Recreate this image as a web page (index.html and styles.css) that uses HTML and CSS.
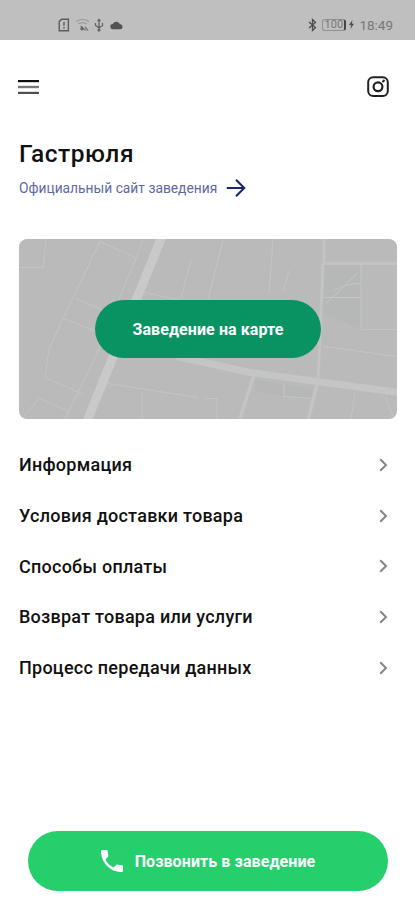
FILE: index.html
```html
<!DOCTYPE html>
<html lang="ru">
<head>
<meta charset="utf-8">
<meta name="viewport" content="width=device-width, initial-scale=1">
<title>Гастрюля</title>
<link rel="stylesheet" href="styles.css">
</head>
<body>
<div class="status">
  <div class="status-left">
    <svg width="12" height="14" viewBox="0 0 12 14" fill="none" stroke="#5c5c5c" stroke-width="1.4"><path d="M1.2 3.6 3.6 1.2h6.800v11.600H1.200z"/><path d="M6 4v3.800M6 9v1.600"/></svg>
    <svg width="16" height="14" viewBox="0 0 16 14" fill="none" stroke="#999" stroke-width="1.200"><path d="M1 3.500q6.500-4 13 0M3.200 6q4.300-2.800 8.600 0"/><path d="m5.500 8 5 4.500M10 9l3 3.500" stroke="#777"/><path d="m5 11 2-3 2 3-2 1.800z" fill="#666" stroke="none"/></svg>
    <svg class="usb" width="10" height="14" viewBox="0 0 10 14" fill="none" stroke="#606060" stroke-width="1.200"><path d="M5 2v10M1.500 5v2.500L5 9.700l3.500-2V5"/><path d="m3 3.300 2-3 2 3z" fill="#606060" stroke="none"/><circle cx="5" cy="12" r="1.500" fill="#606060" stroke="none"/></svg>
    <svg class="cloud" width="13" height="10" viewBox="0 0 13 10"><path d="M3 9.200a2.600 2.600 0 0 1-.2-5.200A3.900 3.900 0 0 1 10 4.200a2.500 2.500 0 0 1 0 5z" fill="#525252"/></svg>
  </div>
  <div class="status-right">
    <svg width="9" height="14" viewBox="0 0 9 14" fill="none" stroke="#4c4c4c" stroke-width="1.300"><path d="m1 4 6.500 5.500-3 3V1.500l3 3L1 10"/></svg>
    <div class="battery">100</div>
    <svg class="bolt" width="5" height="9" viewBox="0 0 5 9"><path d="M3.400 0 0 5h2L1.500 9 5 3.700H3z" fill="#505050"/></svg>
    <span class="clock">18:49</span>
  </div>
</div>
<header class="topbar">
  <svg class="menu" width="22" height="16" viewBox="0 0 22 16"><path d="M0 1h21v2.200H0z" fill="#0c0c0c"/><path d="M0 6.800h21v2.400H0z" fill="#777"/><path d="M0 12.800h21V15H0z" fill="#505050"/></svg>
  <svg class="insta" width="22" height="22" viewBox="0 0 22 22" fill="none" stroke="#202020"><rect x="1.200" y="1.200" width="19.600" height="18.800" rx="5" stroke-width="2"/><circle cx="11" cy="10.800" r="4.400" stroke-width="2.200"/><path d="m15.400 6.100 2.100-2.100" stroke-width="2"/></svg>
</header>
<main>
  <h1 class="title">Гастрюля</h1>
  <a class="site"><span>Официальный сайт заведения</span>
    <svg width="20" height="20" viewBox="0 0 20 20" fill="none" stroke="#17246f" stroke-width="2"><path d="M.8 10H18M10 1.700l8.300 8.300-8.300 8.300"/></svg>
  </a>
  <section class="map">
    <svg class="map-art" viewBox="19 239 378 179" fill="none" stroke="#c5c5c5">
      <path fill="#b4b5b5" stroke="none" d="M324 264h37v65l-37-16zM255 379l61 10-6 10-55-8z" opacity=".6"/>
      <path stroke="#c9c9c9" stroke-width="9" d="m162 236-76 187"/>
      <path stroke="#c4c5c5" stroke-width="7" d="m177 356 73 16 149 20"/>
      <path stroke="#c4c4c4" stroke-width="3.500" d="m254 375-14 43M317 384l-9 36"/>
      <path stroke="#c3c3c3" stroke-width="3" d="M324 239v24h73M323 263l-5 120"/>
      <path d="M20 267h23l3-28M100 241l35 16M100 241 63 318 49 349l-4 28 39 17M76 298l46 20M63 318l34 13M143 240 94 360l-29 58M39 398l28 12M39 398l-17 20M191 260l-10 37M223 240l-15 58M273 239l-4 54M289 270l-6 22M108 383l90 14M142 393v25M145 292l36 8M324 297h38M361 264v65h36M326 303l32-31M334 290q10-7 27-7M324 346l73 10M205 398h12v20M284 383v13l31 2M355 392l-4 27M386 397l8 22"/>
    </svg>
    <button class="map-btn">Заведение на карте</button>
  </section>
  <nav class="list">
    <a class="row"><span>Информация</span><svg class="chev" viewBox="0 0 9 14"><path d="m1.200 1.200 5.800 5.800-5.800 5.800"/></svg></a>
    <a class="row"><span>Условия доставки товара</span><svg class="chev" viewBox="0 0 9 14"><path d="m1.200 1.200 5.800 5.800-5.800 5.800"/></svg></a>
    <a class="row"><span>Способы оплаты</span><svg class="chev" viewBox="0 0 9 14"><path d="m1.200 1.200 5.800 5.800-5.800 5.800"/></svg></a>
    <a class="row"><span>Возврат товара или услуги</span><svg class="chev" viewBox="0 0 9 14"><path d="m1.200 1.200 5.800 5.800-5.800 5.800"/></svg></a>
    <a class="row"><span>Процесс передачи данных</span><svg class="chev" viewBox="0 0 9 14"><path d="m1.200 1.200 5.800 5.800-5.800 5.800"/></svg></a>
  </nav>
</main>
<button class="call">
  <svg width="22" height="22" viewBox="3 3 18 18"><path fill="#fff" d="M6.620 10.790c1.440 2.830 3.760 5.140 6.590 6.590l2.200-2.200c.27-.27.670-.36 1.020-.24 1.120.37 2.330.57 3.570.57.550 0 1 .45 1 1V20c0 .55-.45 1-1 1-9.390 0-17-7.610-17-17 0-.55.450-1 1-1h3.500c.55 0 1 .45 1 1 0 1.250.200 2.450.570 3.570.110.350.030.740-.25 1.020l-2.200 2.200z"/></svg>
  <span>Позвонить в заведение</span>
</button>
</body>
</html>
```
FILE: styles.css
```css
* { box-sizing: border-box; }
body {
  margin: 0;
  height: 900px;
  display: flex;
  flex-direction: column;
  background: #fff;
  font-family: Roboto, sans-serif;
  color: #111;
  overflow: hidden;
}
svg { display: block; flex: none; }
button { border: 0; padding: 0; font-family: inherit; color: #fff; }
.status {
  height: 40px;
  flex: none;
  background: #bfbfbf;
  display: flex;
  justify-content: space-between;
  padding: 9px 22px 0 58px;
}
.status-left, .status-right { display: flex; align-items: center; height: 31px; }
.status-left { gap: 5px; }
.usb { margin-left: -2px; }
.cloud { margin-left: 1px; }
.status-right { color: #777; }
.battery {
  width: 24px;
  height: 12px;
  margin-left: 5px;
  border: 1px solid #909090;
  border-right: 2px solid #444;
  border-radius: 3px;
  font-size: 11px;
  line-height: 10px;
  text-align: center;
}
.bolt { margin: 0 5px 0 3px; }
.clock { font-size: 13.500px; line-height: 16px; }
.topbar {
  height: 93px;
  flex: none;
  display: flex;
  align-items: center;
  justify-content: space-between;
  padding: 0 26px 0 18px;
}
main { padding: 0 18px 0 19px; }
.title {
  margin: 6px 0 0;
  font-size: 24.500px;
  line-height: 30px;
  font-weight: 500;
  letter-spacing: .55px;
}
.site {
  display: flex;
  align-items: center;
  gap: 9px;
  height: 20px;
  margin-top: 9px;
  font-size: 13.800px;
  color: #5f699e;
}
.map {
  display: grid;
  place-items: center;
  height: 180px;
  margin-top: 41px;
  border-radius: 8px;
  background: #bababa;
  overflow: hidden;
}
.map-art, .map-btn { grid-area: 1 / 1; }
.map-art { width: 378px; height: 180px; }
.map-btn {
  width: 226px;
  height: 58px;
  border-radius: 29px;
  background: #0a9362;
  font-size: 16px;
  font-weight: 700;
  letter-spacing: .08px;
}
.list { margin-top: 20.500px; }
.row {
  height: 50.700px;
  display: flex;
  align-items: center;
  justify-content: space-between;
  padding-right: 9px;
  font-size: 18px;
  font-weight: 500;
  letter-spacing: .25px;
}
.chev { width: 9px; height: 14px; fill: none; stroke: #858585; stroke-width: 2; }
.call {
  display: flex;
  align-items: center;
  justify-content: center;
  gap: 12px;
  width: 360px;
  height: 60px;
  margin: auto 0 9px 28px;
  border-radius: 30px;
  background: #25d06c;
  font-size: 16px;
  font-weight: 700;
  letter-spacing: .09px;
}
```
